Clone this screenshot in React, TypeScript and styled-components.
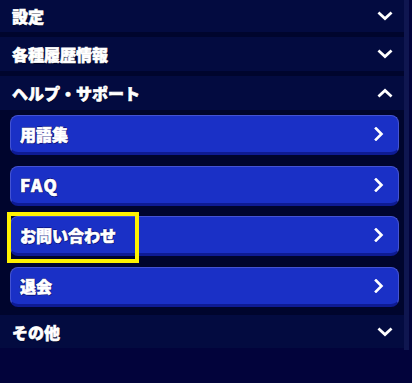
import React from "react";
import styled, { createGlobalStyle } from "styled-components";

const GlobalStyle = createGlobalStyle`
  html, body { margin: 0; padding: 0; background: #02033b; }
  body { font-family: "Noto Sans CJK JP", "Noto Sans", sans-serif; }
`;

const Page = styled.div`
  display: flex;
  width: 412px;
  height: 383px;
  background: #02033b;
  overflow: hidden;
`;

const Content = styled.div`
  flex: 1;
  display: flex;
  flex-direction: column;
  align-self: flex-start;
  gap: 5px;
  background: #00052d;
`;

const ScrollTrack = styled.div`
  width: 8px;
  display: flex;
  background: #02033b;
`;

const ScrollThumb = styled.div`
  width: 5px;
  height: 350px;
  background: #0f1650;
`;

const Header = styled.div<{ $h: number }>`
  height: ${(p) => p.$h}px;
  display: flex;
  align-items: center;
  justify-content: space-between;
  padding: 0 11px 0 12px;
  background: #030b40;
  color: #fff;
  font-size: 16px;
  font-weight: 900;
  -webkit-text-stroke: 0.6px #fff;
  text-shadow: 0 1px 1px rgba(0, 0, 20, 0.8);
`;

const Panel = styled.div`
  display: flex;
  flex-direction: column;
  gap: 10.5px;
  padding: 5px 5px 3.5px 10px;
  background: #00052d;
`;

const Button = styled.div`
  position: relative;
  box-sizing: border-box;
  height: 40px;
  display: flex;
  align-items: center;
  justify-content: space-between;
  padding: 0 14px 0 9px;
  background: #1a30c6;
  border: 1px solid #4453d3;
  border-bottom: 3px solid #0e1b93;
  border-radius: 8px;
  color: #fff;
  font-size: 16px;
  font-weight: 900;
  -webkit-text-stroke: 0.6px #fff;
  text-shadow: 1px 0 0 #0b147e, -1px 0 0 #0b147e, 0 1px 0 #0b147e,
    0 -1px 0 #0b147e, 1px 1px 0 #0b147e;
`;

const Label = styled.span<{ $latin?: boolean }>`
  font-size: ${(p) => (p.$latin ? "17px" : "16px")};
  letter-spacing: ${(p) => (p.$latin ? "1.5px" : "0")};
`;

const Highlight = styled.div`
  position: absolute;
  left: -4px;
  top: -5px;
  width: 132px;
  height: 51px;
  box-sizing: border-box;
  border: 4px solid #fff200;
  pointer-events: none;
`;

const Chevron = ({ dir }: { dir: "up" | "down" }) => (
  <svg width="16" height="10" viewBox="0 0 16 10">
    <polyline
      points={dir === "down" ? "2.5,2.5 8,7.5 13.5,2.5" : "2.5,7.5 8,2.5 13.5,7.5"}
      fill="none"
      stroke="#fff"
      strokeWidth="2.8"
      strokeLinecap="square"
    />
  </svg>
);

const Arrow = () => (
  <svg width="10" height="14" viewBox="0 0 10 14">
    <polyline
      points="2,1.5 7.5,7 2,12.5"
      fill="none"
      stroke="#fff"
      strokeWidth="2.6"
      strokeLinecap="square"
    />
  </svg>
);

const items = ["用語集", "FAQ", "お問い合わせ", "退会"];

export default function App() {
  return (
    <>
      <GlobalStyle />
      <Page>
        <Content>
          <Header $h={32}>
            <span>設定</span>
            <Chevron dir="down" />
          </Header>
          <Header $h={34}>
            <span>各種履歴情報</span>
            <Chevron dir="down" />
          </Header>
          <div>
            <Header $h={34}>
              <span>ヘルプ・サポート</span>
              <Chevron dir="up" />
            </Header>
            <Panel>
              {items.map((t) => (
                <Button key={t}>
                  <Label $latin={t === "FAQ"}>{t}</Label>
                  <Arrow />
                  {t === "お問い合わせ" && <Highlight />}
                </Button>
              ))}
            </Panel>
          </div>
          <Header $h={33}>
            <span>その他</span>
            <Chevron dir="down" />
          </Header>
        </Content>
        <ScrollTrack>
          <ScrollThumb />
        </ScrollTrack>
      </Page>
    </>
  );
}
